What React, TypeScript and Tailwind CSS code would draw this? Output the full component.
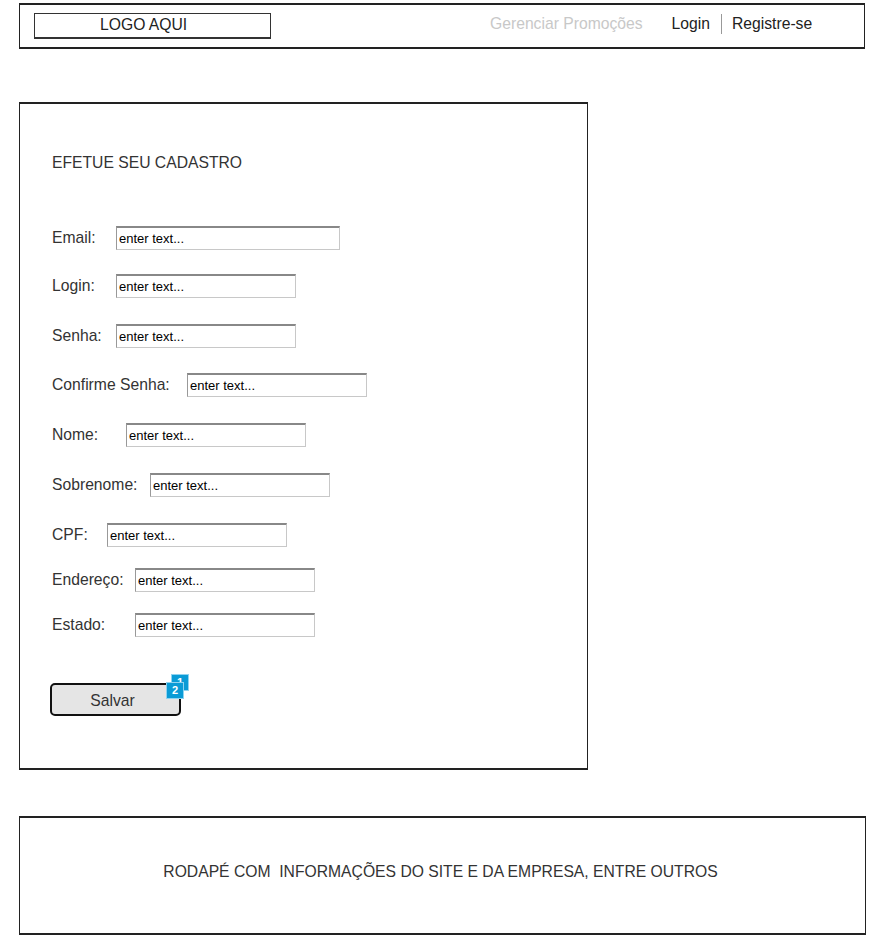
import React from "react";

const fields = [
  { label: "Email:", lw: 64, iw: 224, mt: 54 },
  { label: "Login:", lw: 64, iw: 180, mt: 24 },
  { label: "Senha:", lw: 64, iw: 180, mt: 26 },
  { label: "Confirme Senha:", lw: 135, iw: 180, mt: 25 },
  { label: "Nome:", lw: 74, iw: 180, mt: 26 },
  { label: "Sobrenome:", lw: 98, iw: 180, mt: 26 },
  { label: "CPF:", lw: 55, iw: 180, mt: 26 },
  { label: "Endereço:", lw: 83, iw: 180, mt: 21 },
  { label: "Estado:", lw: 83, iw: 180, mt: 21 },
];

function Field({ label, lw, iw, mt }: { label: string; lw: number; iw: number; mt: number }) {
  return (
    <div className="flex items-center h-[24px]" style={{ marginTop: mt }}>
      <div className="text-[15.7px] text-[#333] leading-none shrink-0 pb-[1px]" style={{ width: lw }}>
        {label}
      </div>
      <div
        className="h-[24px] bg-white border border-[#c8c8c8] border-t-[2px] border-t-[#888] border-l-[#999] flex items-center pl-[2px] text-[13px] text-black"
        style={{ width: iw }}
      >
        enter text...
      </div>
    </div>
  );
}

export default function App() {
  return (
    <div className="min-h-[943px] bg-white pl-[19px] pt-[3px] text-[#333]" style={{ fontFamily: '"Liberation Sans", Arial, sans-serif' }}>
      {/* Header */}
      <div className="w-[846px] h-[46px] border-y-2 border-x border-[#222] flex items-center">
        <div className="ml-[14px] w-[237px] h-[26px] border border-[#333] border-b-2 flex items-center pb-[1px]">
          <span className="ml-[65px] text-[15.7px] text-[#222]">LOGO AQUI</span>
        </div>
        <div className="ml-[219px] text-[15.7px] text-[#c8c8c8] pb-[4px]">Gerenciar Promoções</div>
        <div className="ml-[29px] text-[15.7px] text-[#222] pb-[4px]">Login</div>
        <div className="ml-[11px] w-px h-[20px] bg-[#999] mb-[4px]" />
        <div className="ml-[10px] text-[15.7px] text-[#222] pb-[4px]">Registre-se</div>
      </div>

      {/* Form */}
      <div className="mt-[53px] w-[569px] h-[668px] border-y-2 border-x border-[#222] pl-[32px] pt-[50px]">
        <div className="text-[15.7px] leading-[18px] text-[#333]">EFETUE SEU CADASTRO</div>
        {fields.map((f) => (
          <Field key={f.label} {...f} />
        ))}
        <div className="relative mt-[46px] ml-[-2px] w-[131px] h-[33px] bg-[#e5e5e5] border-2 border-[#111] rounded-[5px] flex items-center justify-center text-[15.7px] text-[#333] pt-[2px] pr-[6px]">
          Salvar
          <div className="absolute left-[119px] top-[-11px] w-[18px] h-[17px] bg-[#0a9bd6] border border-[#8fd3f0] text-white text-[11px] font-bold leading-none flex items-center justify-center">
            1
          </div>
          <div className="absolute left-[114px] top-[-3px] w-[18px] h-[17px] bg-[#0a9bd6] border border-[#8fd3f0] text-white text-[11px] font-bold leading-none flex items-center justify-center">
            2
          </div>
        </div>
      </div>

      {/* Footer */}
      <div className="mt-[46px] w-[847px] h-[119px] border-y-2 border-x border-[#222] flex items-center justify-center pb-[8px] pr-[4px]">
        <span className="text-[15.7px] text-[#333] whitespace-pre">RODAPÉ COM  INFORMAÇÕES DO SITE E DA EMPRESA, ENTRE OUTROS</span>
      </div>
    </div>
  );
}
